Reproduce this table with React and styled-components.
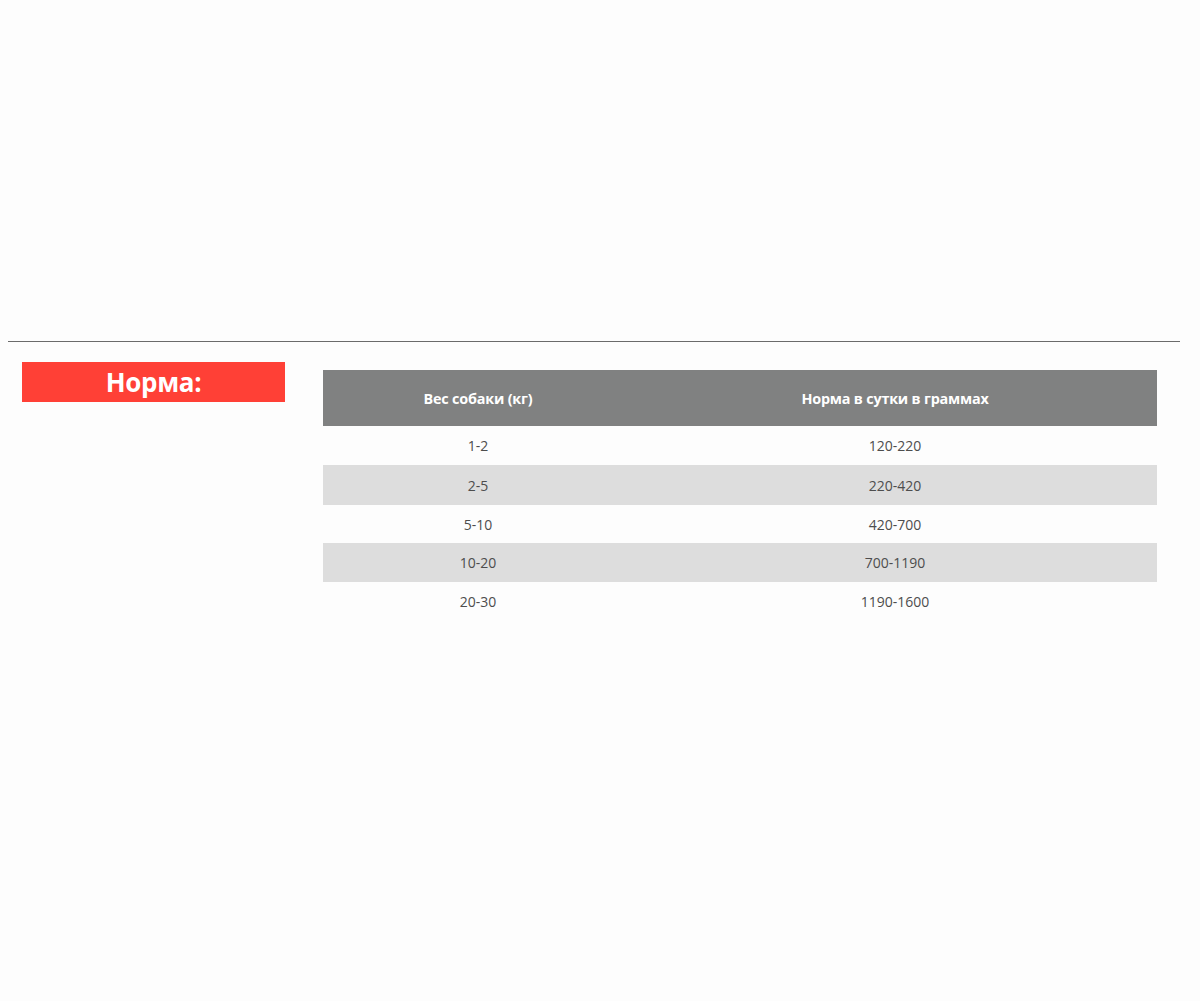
import styled, { createGlobalStyle } from "styled-components";
import React from "react";

const GlobalStyle = createGlobalStyle`
  html, body {
    margin: 0;
    padding: 0;
    background: #fdfdfd;
    font-family: "Open Sans", "Noto Sans", sans-serif;
  }
`;

const Page = styled.div`
  padding-top: 341px;
  min-height: 1001px;
  box-sizing: border-box;
`;

const Divider = styled.div`
  height: 1px;
  background: #6b6b6b;
  margin: 0 20px 0 8px;
`;

const Section = styled.div`
  display: flex;
  align-items: flex-start;
  padding-left: 22px;
`;

const Badge = styled.div`
  margin-top: 20px;
  width: 263px;
  height: 40px;
  background: #ff4036;
  color: #fff;
  font-weight: 700;
  font-size: 26px;
  letter-spacing: -0.3px;
  display: flex;
  align-items: center;
  justify-content: center;
`;

const Table = styled.table`
  margin-top: 28px;
  margin-left: 38px;
  width: 834px;
  border-collapse: collapse;
  font-size: 14px;
  color: #4d4d4d;
`;

const HeadCell = styled.th`
  background: #808181;
  color: #fff;
  font-weight: 700;
  font-size: 14.4px;
  height: 56px;
  padding: 0;
  text-align: center;
  letter-spacing: -0.2px;
  width: ${(p) => p.$w}px;
`;

const Row = styled.tr`
  background: ${(p) => (p.$shade ? "#dddddd" : "transparent")};
`;

const Cell = styled.td`
  height: ${(p) => p.$h}px;
  text-align: center;
  padding: 0;
`;

const rows = [
  ["1-2", "120-220", 39],
  ["2-5", "220-420", 40],
  ["5-10", "420-700", 38],
  ["10-20", "700-1190", 39],
  ["20-30", "1190-1600", 38],
];

export default function App() {
  return (
    <Page>
      <GlobalStyle />
      <Divider />
      <Section>
        <Badge>Норма:</Badge>
        <Table>
          <thead>
            <tr>
              <HeadCell $w={310}>Вес собаки (кг)</HeadCell>
              <HeadCell $w={524}>Норма в сутки в граммах</HeadCell>
            </tr>
          </thead>
          <tbody>
            {rows.map(([w, n, h], i) => (
              <Row key={w} $shade={i % 2 === 1}>
                <Cell $h={h}>{w}</Cell>
                <Cell $h={h}>{n}</Cell>
              </Row>
            ))}
          </tbody>
        </Table>
      </Section>
    </Page>
  );
}
